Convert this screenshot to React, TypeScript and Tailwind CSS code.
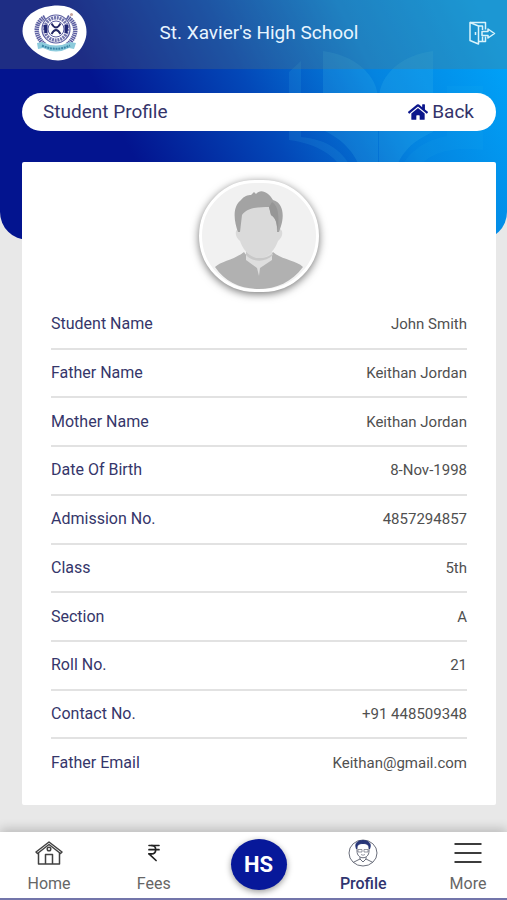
import React from 'react';
import { FaHome } from 'react-icons/fa';
import { IndianRupee } from 'lucide-react';

interface ProfileField {
  label: string;
  value: string;
}

const PROFILE_FIELDS: ProfileField[] = [
  { label: 'Student Name', value: 'John Smith' },
  { label: 'Father Name', value: 'Keithan Jordan' },
  { label: 'Mother Name', value: 'Keithan Jordan' },
  { label: 'Date Of Birth', value: '8-Nov-1998' },
  { label: 'Admission No.', value: '4857294857' },
  { label: 'Class', value: '5th' },
  { label: 'Section', value: 'A' },
  { label: 'Roll No.', value: '21' },
  { label: 'Contact No.', value: '+91 448509348' },
  { label: 'Father Email', value: 'Keithan@gmail.com' },
];

const SchoolLogo: React.FC = () => (
  <svg className="w-[66px] h-14" viewBox="0 0 66 56" role="img" aria-label="School crest">
    <path d="M36 .5C53 .5 64.500 12 64.500 27C64.500 41 52 55.500 36 55.500C22 55.500 .5 42 .5 26C.5 9 18 .5 36 .5Z" fill="#fff" />
    {/* laurel branches */}
    <g fill="none" stroke="#5a5da0">
      <path d="M23 12C12 18 12 31 23 40M45 12C56 18 56 31 45 40" strokeWidth="4.500" strokeDasharray="1.500 .6" />
      <ellipse cx="34" cy="24" rx="14" ry="14" strokeWidth="1.200" fill="#fff" />
      <ellipse cx="34" cy="24" rx="11.200" ry="11.200" strokeWidth="3.500" strokeDasharray="2 .8" stroke="#7376ae" />
      <ellipse cx="34" cy="24" rx="8" ry="8" strokeWidth="1" />
      <path d="M29.500 18.500Q34 26.500 38.500 18.500M29.500 29Q34 21 38.500 29" strokeWidth="1.800" stroke="#242863" />
    </g>
    <path d="M21.500 20H25.500V28H22.500ZM42.500 20H46.500L45.500 28H42.500Z" fill="#202775" />
    <path d="M15 38L20 37Q34 44 48 37L54 38L52 44L47 43Q34 50 21 43L16 44Z" fill="#8ccbdc" />
    <path d="M20 40.500Q34 47 48 40.500" fill="none" stroke="#3a87a8" strokeWidth="2" strokeDasharray="2 .8" />
    <circle cx="49.500" cy="9.500" r="1.500" fill="#c4a39c" />
  </svg>
);

const LogoutIcon: React.FC = () => (
  <svg className="w-7 h-6" viewBox="0 0 28 24" fill="none" stroke="#d9f3fb" strokeWidth="1.500" strokeLinejoin="round">
    <path d="M2 1.500L10.500 5V23L2 19.500Z" />
    <path d="M2 1.500H17.500V8.500M17.500 15.500V20.500H10.500M10.500 5H14.500V9M14.500 15.500V20" />
    <path d="M7.500 11V14" />
    <path d="M14 10.500H20V8L26.500 12.500L20 17V14.500H14Z" />
  </svg>
);

const BookArt: React.FC = () => (
  <svg className="absolute right-0 top-0 w-60 h-60" viewBox="267 0 240 240" fill="#48c5ec" aria-hidden="true">
    <path d="M323 51C354 55 377 74 378 98V175H362C356 151 341 139 323 130Z" opacity=".17" />
    <path d="M433 51C402 55 380 74 379 98V175H394C400 151 415 140 433 132Z" opacity=".17" />
    <path d="M289 72L301 61V137C326 139 346 151 354 175H346C336 155 317 144 289 140Z" opacity=".12" />
    <path d="M398 175C406 152 425 140 447 136V86H483V150C446 146 424 155 414 175Z" opacity=".06" />
  </svg>
);

const Avatar: React.FC = () => (
  <svg className="w-30 h-28 rounded-full border-3 border-white bg-[#f1f1f1] shadow-[0_2px_8px_rgba(0,0,0,0.55)]" viewBox="0 0 114 106" role="img" aria-label="Student photo">
    <path d="M13 84C19 78 32 77 42 69C47 78 64 79 71 69C80 77 94 77 101 84C90 99 74 106 57 106C39 106 23 99 13 84Z" fill="#b1b1b1" />
    <path d="M44 60H70V77L58 85L57 93L55 85L44 77Z" fill="#dedede" />
    <path d="M44 68C51 76 63 78 71 70V72C63 80 50 79 44 72Z" fill="#c8c8c8" />
    <path d="M37 46C32 46 33 55 38 58C41 67 48 75 57 75C66 75 73 67 76 58C81 55 82 46 77 46V25C70 15 44 15 37 25Z" fill="#dadada" />
    <path d="M38 49H36C32 38 30 24 39 17C42 13 46 12 49 12L52 9L54 11C59 5 67 10 71 17C82 20 82 34 79 43L77 49H75C75 41 75 36 69 32L67 24C58 24 45 24 40 32Z" fill="#a3a3a3" />
    <path d="M67 24L70 19C77 23 77 34 76 47C74 41 75 36 69 32Z" fill="#969696" />
  </svg>
);

const HomeIcon: React.FC = () => (
  <svg className="w-7 h-6" viewBox="0 0 28 24" fill="none" stroke="#414141" strokeWidth="1.500" strokeLinejoin="round">
    <path d="M1 11L14 1L27 11L25.500 12.500L14 3.500L2.500 12.500Z" />
    <path d="M3.500 12V23H24.500V12M10.500 23V13.500H17.500V23" />
    <circle cx="14" cy="8" r="1.800" />
  </svg>
);

const ProfileIcon: React.FC = () => (
  <svg className="w-[30px] h-7" viewBox="0 0 30 28" fill="none" stroke="#6b6f7c" strokeWidth="1">
    <ellipse cx="15" cy="14" rx="14" ry="13" />
    <path d="M9 8V12C9 21 21 21 21 12V8" />
    <path d="M8.500 10C6 3 11 1.500 15 1.500C20 1.500 24 4 21.500 10C21 5 18 4.500 15 4.500C12 4.500 9 5 8.500 10Z" fill="#273577" stroke="#273577" />
    <path d="M10 10.500H14V13H10ZM16 10.500H20V13H16ZM13 15.500Q15 17 17 15.500" strokeWidth=".7" />
    <path d="M12 18V20L5 23.500M18 18V20L25 23.500M12 20L15 23L18 20" />
  </svg>
);

const MenuIcon: React.FC = () => (
  <svg className="w-7 h-6" viewBox="0 0 28 24" stroke="#3c3c3c" strokeWidth="1.800">
    <path d="M.5 3H27.500M.5 12H27.500M.5 21H27.500" />
  </svg>
);

interface NavItemProps {
  label: string;
  active?: boolean;
  children: React.ReactNode;
}

const NavItem: React.FC<NavItemProps> = ({ label, active, children }) => (
  <a
    href="#"
    aria-current={active ? 'page' : undefined}
    className={`w-14 flex flex-col items-center gap-[5px] text-base leading-6 ${active ? 'text-[#303570] font-medium' : 'text-[#666]'}`}
  >
    <span className="h-7 flex items-center">{children}</span>
    {label}
  </a>
);

const App: React.FC = () => {
  return (
    <div className="min-h-screen flex flex-col bg-[#e8e8e8] font-[Roboto,sans-serif]">
      <div className="relative rounded-b-[28px] overflow-hidden bg-[linear-gradient(62deg,#03148f_28%,#0348b8_52%,#0484e0_73%,#00a2f8_95%)] pb-[109px]">
        <BookArt />
        <header className="relative h-[69px] pb-[3px] pl-[22px] pr-[11px] flex items-center justify-between bg-[#6e7864]/25">
          <SchoolLogo />
          <h1 className="text-[19px] text-[#e8f5ff]">St. Xavier's High School</h1>
          <div className="w-[66px] flex justify-end">
            <button type="button" aria-label="Log out">
              <LogoutIcon />
            </button>
          </div>
        </header>
        <div className="relative mt-6 ml-[22px] mr-[11px] h-[38px] pl-[21px] pr-[22px] rounded-full bg-white flex items-center justify-between text-[19px] text-[#34336a]">
          <h2>Student Profile</h2>
          <a href="#" className="flex items-center gap-1">
            <FaHome className="w-5 h-5 text-[#0b168c]" />
            Back
          </a>
        </div>
      </div>

      <main className="relative flex-1 flex flex-col -mt-[78px] mb-[27px] ml-[22px] mr-[11px] px-[29px] pt-[18px] pb-[19px] bg-white rounded-xs">
        <div className="flex justify-center pb-[9px]">
          <Avatar />
        </div>
        <dl className="flex-1 flex flex-col">
          {PROFILE_FIELDS.map(field => (
            <div key={field.label} className="flex-1 py-3 flex items-center justify-between border-b-2 border-[#e2e2e2] last:border-b-0">
              <dt className="text-base leading-5 text-[#35366a]">{field.label}</dt>
              <dd className="text-[15px] leading-5 text-[#505050]">{field.value}</dd>
            </div>
          ))}
        </dl>
      </main>

      <nav className="sticky bottom-0 h-[68px] pl-[21px] pr-[11px] pt-[7px] flex items-start justify-between bg-white border-b-2 border-[#7375aa] shadow-[0_-3px_10px_rgba(0,0,0,0.2)]">
        <NavItem label="Home">
          <HomeIcon />
        </NavItem>
        <NavItem label="Fees">
          <IndianRupee className="w-5 h-[22px] text-[#222]" strokeWidth={2} />
        </NavItem>
        <a href="#" className="w-14 h-[51px] rounded-[50%] flex items-center justify-center bg-[#07189a] text-white text-[22px] font-bold shadow-[0_2px_6px_rgba(0,0,0,0.4)]">
          HS
        </a>
        <NavItem label="Profile" active>
          <ProfileIcon />
        </NavItem>
        <NavItem label="More">
          <MenuIcon />
        </NavItem>
      </nav>
    </div>
  );
};

export default App;
